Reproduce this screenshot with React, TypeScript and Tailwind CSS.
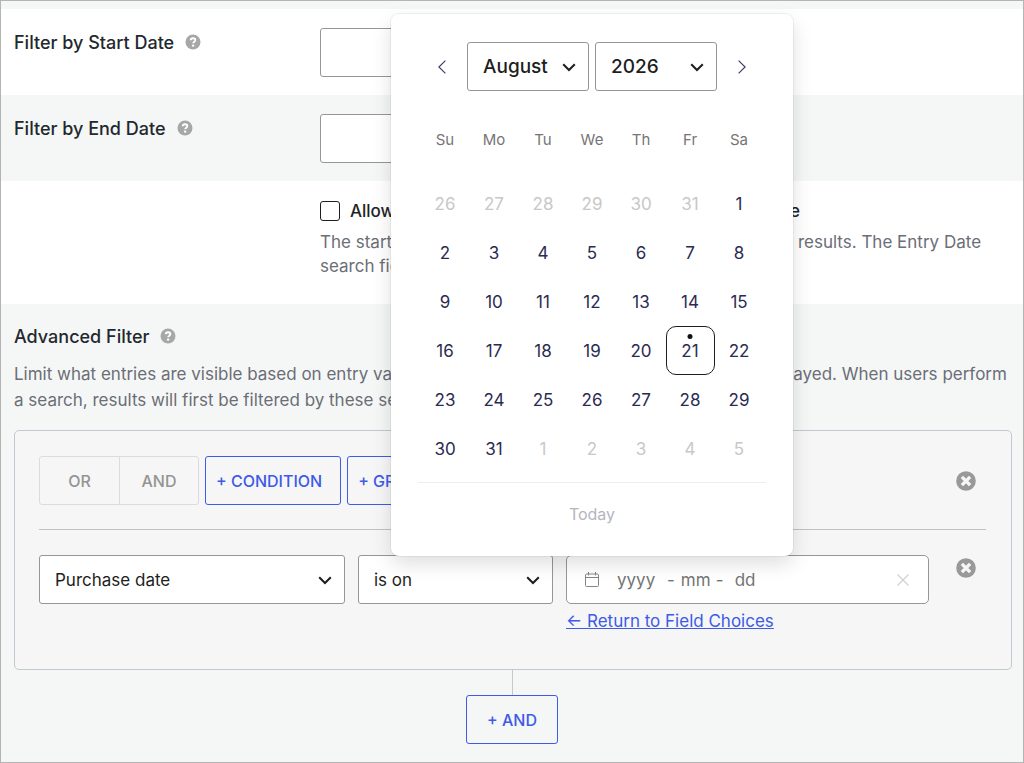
import React, { useState } from "react";

const MONTHS = ["January", "February", "March", "April", "May", "June", "July", "August", "September", "October", "November", "December"];
const YEARS = [2024, 2025, 2026, 2027, 2028];
const WEEKDAYS = ["Su", "Mo", "Tu", "We", "Th", "Fr", "Sa"];
const TODAY = { year: 2026, month: 7, day: 21 };

type Day = { day: number; outside: boolean; today: boolean };

function getWeeks(year: number, month: number): Day[][] {
  const offset = new Date(year, month, 1).getDay();
  return Array.from({ length: 6 }, (_, w) =>
    Array.from({ length: 7 }, (_, d) => {
      const date = new Date(year, month, 1 - offset + w * 7 + d);
      return {
        day: date.getDate(),
        outside: date.getMonth() !== month,
        today: date.getFullYear() === TODAY.year && date.getMonth() === TODAY.month && date.getDate() === TODAY.day,
      };
    })
  );
}

function Chevron() {
  return (
    <svg viewBox="0 0 20 20" className="pointer-events-none absolute right-[10px] top-1/2 size-5 -translate-y-1/2" fill="none" stroke="#1e1e1e" strokeWidth="2" aria-hidden="true">
      <path d="M4.2 7.2l5.8 5.8 5.8-5.8" />
    </svg>
  );
}

function Select({ label, value, onChange, options, className = "" }: {
  label: string; value: string; onChange: (v: string) => void; options: string[]; className?: string;
}) {
  return (
    <div className={`relative self-start ${className}`}>
      <select
        aria-label={label}
        value={value}
        onChange={(e) => onChange(e.target.value)}
        className="block h-[49px] w-full appearance-none rounded-[3px] border border-[#949699] bg-white pl-[15px] pr-8 text-[#1e1e1e]"
      >
        {options.map((o) => <option key={o}>{o}</option>)}
      </select>
      <Chevron />
    </div>
  );
}

function HelpButton({ about }: { about: string }) {
  return (
    <button type="button" aria-label={`Help: ${about}`} className="mb-[2px] size-4 rounded-full">
      <svg viewBox="0 0 16 16" className="size-4" aria-hidden="true">
        <circle cx="8" cy="8" r="7.5" fill="#a7a7a7" />
        <path d="M5.7 6.3C5.8 4.9 6.7 4.2 8 4.2s2.3.8 2.3 1.9c0 1.6-2.1 1.6-2.1 3.2" fill="none" stroke="#fff" strokeWidth="1.9" />
        <circle cx="8.1" cy="11.6" r="1.2" fill="#fff" />
      </svg>
    </button>
  );
}

function RemoveButton({ label }: { label: string }) {
  return (
    <button type="button" aria-label={label} className="size-5 shrink-0">
      <svg viewBox="0 0 20 20" className="size-5" aria-hidden="true">
        <circle cx="10" cy="10" r="9.8" fill="#999" />
        <path d="M5.9 5.9l8.2 8.2M14.1 5.9l-8.2 8.2" stroke="#f6f6f6" strokeWidth="3.4" />
      </svg>
    </button>
  );
}

function DateRow({ id, label, className }: { id: string; label: string; className: string }) {
  return (
    <div className={`flex items-start px-[13px] pb-[18px] pt-[19px] ${className}`}>
      <div className="flex w-[306px] shrink-0 items-center gap-[11px] pt-[3px]">
        <label htmlFor={id} className="text-[18px] font-medium text-[#23282d]">{label}</label>
        <HelpButton about={label} />
      </div>
      <input id={id} type="text" className="h-[49px] w-full max-w-[400px] rounded-[3px] border border-[#949699] bg-white px-4" />
    </div>
  );
}

function Calendar() {
  const [month, setMonth] = useState(7);
  const [year, setYear] = useState(2026);

  const shift = (n: number) => {
    const next = new Date(year, month + n, 1);
    setMonth(next.getMonth());
    setYear(next.getFullYear());
  };

  return (
    <div
      role="dialog"
      aria-label="Choose date"
      className="absolute -left-[175px] bottom-12 z-10 w-[402px] rounded-[8px] bg-white px-[27px] pt-7 shadow-[0_0_0_1px_rgba(0,0,0,0.05),0_8px_20px_rgba(0,0,0,0.13)]"
    >
      <div className="flex items-center justify-center gap-[6px] text-[19px] font-medium">
        <button type="button" aria-label="Previous month" onClick={() => shift(-1)} className="flex h-12 w-[38px] items-center justify-center">
          <svg viewBox="0 0 8 14" className="h-[14px] w-2" fill="none" stroke="#3c3f6e" strokeWidth="1.2" aria-hidden="true"><path d="M7.4.6L.9 7l6.5 6.4" /></svg>
        </button>
        <Select label="Month" value={MONTHS[month]} onChange={(v) => setMonth(MONTHS.indexOf(v))} options={MONTHS} className="w-[122px]" />
        <Select label="Year" value={String(year)} onChange={(v) => setYear(Number(v))} options={YEARS.map(String)} className="w-[122px]" />
        <button type="button" aria-label="Next month" onClick={() => shift(1)} className="flex h-12 w-[38px] items-center justify-center">
          <svg viewBox="0 0 8 14" className="h-[14px] w-2" fill="none" stroke="#3c3f6e" strokeWidth="1.2" aria-hidden="true"><path d="M.6.6L7.1 7 .6 13.4" /></svg>
        </button>
      </div>

      <table className="mx-auto mt-6 table-fixed border-collapse text-center">
        <thead>
          <tr>
            {WEEKDAYS.map((d) => (
              <th key={d} scope="col" className="h-16 w-[49px] p-0 pb-[14px] text-[15px] font-normal text-[#757575]">{d}</th>
            ))}
          </tr>
        </thead>
        <tbody>
          {getWeeks(year, month).map((week, i) => (
            <tr key={i}>
              {week.map((d, j) => (
                <td key={j} className="size-[49px] p-0">
                  <button
                    type="button"
                    className={`relative block size-[49px] rounded-[10px] border ${d.today ? "border-[#1e1e1e]" : "border-transparent"} ${d.outside ? "text-[#c8c8c8]" : "text-[#2b2b52]"}`}
                  >
                    {d.day}
                    {d.today && <span className="absolute left-1/2 top-[7px] size-[5px] -translate-x-1/2 rounded-full bg-[#111]" />}
                  </button>
                </td>
              ))}
            </tr>
          ))}
        </tbody>
      </table>

      <div className="mt-[9px] border-t border-[#eeeeee] pb-[18px] pt-[7px] text-center">
        <button
          type="button"
          onClick={() => { setMonth(TODAY.month); setYear(TODAY.year); }}
          className="h-12 px-4 text-[16px] text-[#b5b5bf]"
        >
          Today
        </button>
      </div>
    </div>
  );
}

function DateInput() {
  const part = "bg-transparent p-0 outline-none placeholder:text-[#757575]";
  return (
    <div className="relative">
      <div className="flex h-[49px] items-center rounded-[5px] border border-[#949699] bg-white pl-[18px] pr-[18px] text-[#757575]">
        <button type="button" aria-label="Open calendar" className="mr-[18px] shrink-0">
          <svg viewBox="0 0 14 15" className="h-[15px] w-[14px]" fill="none" stroke="#858585" aria-hidden="true">
            <rect x=".5" y="2" width="13" height="12.5" rx="1" />
            <path d="M.5 5.5h13M3.5 0v3.5M10.5 0v3.5" />
          </svg>
        </button>
        <input aria-label="Year" placeholder="yyyy" className={`${part} w-[50px]`} />
        <span>-</span>
        <input aria-label="Month" placeholder="mm" className={`${part} ml-[6px] w-[30px]`} />
        <span className="ml-[5px]">-</span>
        <input aria-label="Day" placeholder="dd" className={`${part} ml-[11px] w-8`} />
        <button type="button" aria-label="Clear date" className="ml-auto shrink-0">
          <svg viewBox="0 0 14 14" className="size-[14px]" stroke="#d0d0d0" strokeWidth="1.2" aria-hidden="true"><path d="M1.5 1.5l11 11M12.5 1.5l-11 11" /></svg>
        </button>
      </div>
      <Calendar />
    </div>
  );
}

export default function App() {
  const [field, setField] = useState("Purchase date");
  const [operator, setOperator] = useState("is on");
  const blueButton = "h-[49px] rounded-[3px] border border-[#3d5ae8] font-medium text-[16px] text-[#3d5ae8]";

  return (
    <div className="min-h-screen border border-[#b4b4b4] bg-[#f5f7f7] pt-2 font-['Inter',sans-serif] text-[17px] leading-6">
      <DateRow id="start-date" label="Filter by Start Date" className="bg-white" />
      <DateRow id="end-date" label="Filter by End Date" className="" />

      <div className="bg-white pb-[26px] pl-[319px] pr-3 pt-[18px]">
        <div className="flex items-center gap-[10px]">
          <input id="override" type="checkbox" className="size-5 shrink-0 appearance-none rounded-[3px] border border-[#1e1e1e] bg-white checked:bg-[#3d5ae8]" />
          <label htmlFor="override" className="font-medium text-[#1e2327]">Allow searches to go beyond the configured date range</label>
        </div>
        <p className="mt-[7px] text-[#6b6e76]">
          The start and end dates entered above will filter the search results. The Entry Date search field can show entries outside of them.
        </p>
      </div>

      <section className="px-[13px] pb-[18px] pt-[21px]">
        <div className="flex items-center gap-[11px]">
          <h2 className="text-[18px] font-medium text-[#23282d]">Advanced Filter</h2>
          <HelpButton about="Advanced Filter" />
        </div>
        <p className="mt-3 leading-[26px] text-[#6b6e76]">
          Limit what entries are visible based on entry values. The rows are filtered before the View is displayed. When users perform a search, results will first be filtered by these settings.
        </p>

        <div className="mr-[-2px] mt-[17px] rounded-[5px] border border-[#c3c7cf] bg-[#f6f6f6] pb-9 pl-6 pr-[25px] pt-[25px]">
          <div className="flex items-center gap-[6px] border-b border-[#bfc2c7] pb-6 pr-[10px]">
            <div className="flex h-[49px] overflow-hidden rounded-[3px] border border-[#dcdcde] text-[16px] font-medium text-[#949494]">
              <button type="button" className="w-20 border-r border-[#dcdcde]">OR</button>
              <button type="button" className="w-[78px]">AND</button>
            </div>
            <button type="button" className={`${blueButton} pl-[10px] pr-[18px]`}>+ CONDITION</button>
            <button type="button" className={`${blueButton} pl-[10px] pr-[18px]`}>+ GROUP</button>
            <div className="ml-auto flex"><RemoveButton label="Remove group" /></div>
          </div>

          <div className="flex items-start pr-[10px] pt-[25px]">
            <div className="mr-[27px] grid min-w-0 flex-1 grid-cols-[306fr_195fr_363fr] gap-x-[13px]">
              <Select label="Field" value={field} onChange={setField} options={["Purchase date", "Entry date"]} />
              <Select label="Operator" value={operator} onChange={setOperator} options={["is on", "is before", "is after"]} />
              <div>
                <DateInput />
                <a href="#fields" className="mt-[5px] inline-block text-[#3d5ae8] underline">← Return to Field Choices</a>
              </div>
            </div>
            <div className="flex pt-[3px]"><RemoveButton label="Remove condition" /></div>
          </div>
        </div>

        <div className="flex flex-col items-center">
          <span className="h-[25px] w-px bg-[#c3c7cf]" />
          <button type="button" className={`${blueButton} px-5`}>+ AND</button>
        </div>
      </section>
    </div>
  );
}
